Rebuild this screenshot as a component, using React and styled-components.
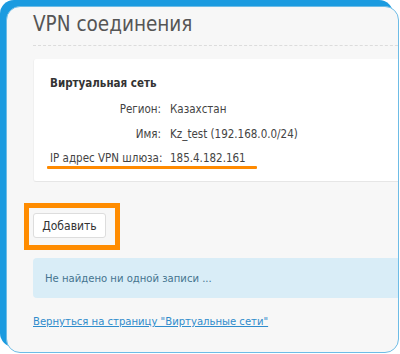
import React from "react";
import styled, { createGlobalStyle } from "styled-components";

const FONT = `"DejaVu Sans Condensed", "DejaVu Sans", Verdana, sans-serif`;

const Global = createGlobalStyle`
  html, body { margin: 0; padding: 0; background: #fff; overflow: hidden; }
  body { font-family: ${FONT}; }
`;

const Panel = styled.div`
  box-sizing: border-box;
  margin: 6px 0 0 6px;
  width: 393px;
  height: 347px;
  background: #f7f7f7;
  border: 1px solid #6dbce6;
  border-radius: 14px;
  box-shadow: -6px -6px 0 0 #1b9be0;
  overflow: hidden;
  padding: 0 0 0 26px;
`;

const Inner = styled.div`
  width: 380px;
`;

const Title = styled.h1`
  margin: 0;
  padding: 8px 0 11px 0;
  font-weight: normal;
  font-size: 20.5px;
  line-height: 19px;
  color: #555;
  border-bottom: 1px dashed #dcdcdc;
`;

const Card = styled.div`
  margin-top: 13px;
  background: #fff;
  border-bottom: 1px solid #e6e6e6;
  border-left: 1px solid #f0f0f0;
  border-radius: 3px 0 0 3px;
  padding: 17px 16px 16px 16px;
`;

const CardTitle = styled.div`
  font-weight: bold;
  font-size: 11.5px;
  line-height: 14px;
  color: #333;
  margin-bottom: 12px;
`;

const Rows = styled.div`
  display: grid;
  grid-template-columns: 111px auto;
  column-gap: 9px;
  row-gap: 10.5px;
  font-size: 11.5px;
  line-height: 14px;
  color: #444;
  position: relative;
  width: max-content;
`;

const Label = styled.span`
  text-align: right;
  white-space: nowrap;
`;

const Value = styled.span`
  white-space: nowrap;
`;

const Underline = styled.div`
  position: absolute;
  left: -3px;
  width: 210px;
  bottom: -4px;
  height: 3px;
  background: #ff8a00;
  border-radius: 1px;
`;

const Highlight = styled.div`
  box-sizing: border-box;
  margin: 21px 0 0 -9px;
  width: 96px;
  height: 47px;
  border: 5px solid #ff8c00;
  display: flex;
  align-items: flex-start;
  padding: 5px 0 0 4px;
`;

const Button = styled.button`
  box-sizing: border-box;
  width: 73px;
  height: 25px;
  background: #fff;
  border: 1px solid #ddd;
  border-radius: 3px;
  font-family: ${FONT};
  font-size: 12px;
  color: #333;
  padding: 0;
`;

const Info = styled.div`
  margin-top: 8px;
  background: #d9edf7;
  border-radius: 4px 0 0 4px;
  height: 40px;
  display: flex;
  align-items: center;
  padding-left: 12px;
  font-size: 11.2px;
  color: #45748f;
`;

const BackLink = styled.a`
  display: inline-block;
  margin-top: 17px;
  font-size: 11.2px;
  line-height: 14px;
  color: #2f8ccc;
  text-decoration: underline;
`;

export default function App() {
  return (
    <>
      <Global />
      <Panel>
        <Inner>
          <Title>VPN соединения</Title>
          <Card>
            <CardTitle>Виртуальная сеть</CardTitle>
            <Rows>
              <Label>Регион:</Label>
              <Value>Казахстан</Value>
              <Label>Имя:</Label>
              <Value>Kz_test (192.168.0.0/24)</Value>
              <Label>IP адрес VPN шлюза:</Label>
              <Value>185.4.182.161</Value>
              <Underline />
            </Rows>
          </Card>
          <Highlight>
            <Button>Добавить</Button>
          </Highlight>
          <Info>Не найдено ни одной записи ...</Info>
          <BackLink href="#">Вернуться на страницу "Виртуальные сети"</BackLink>
        </Inner>
      </Panel>
    </>
  );
}
